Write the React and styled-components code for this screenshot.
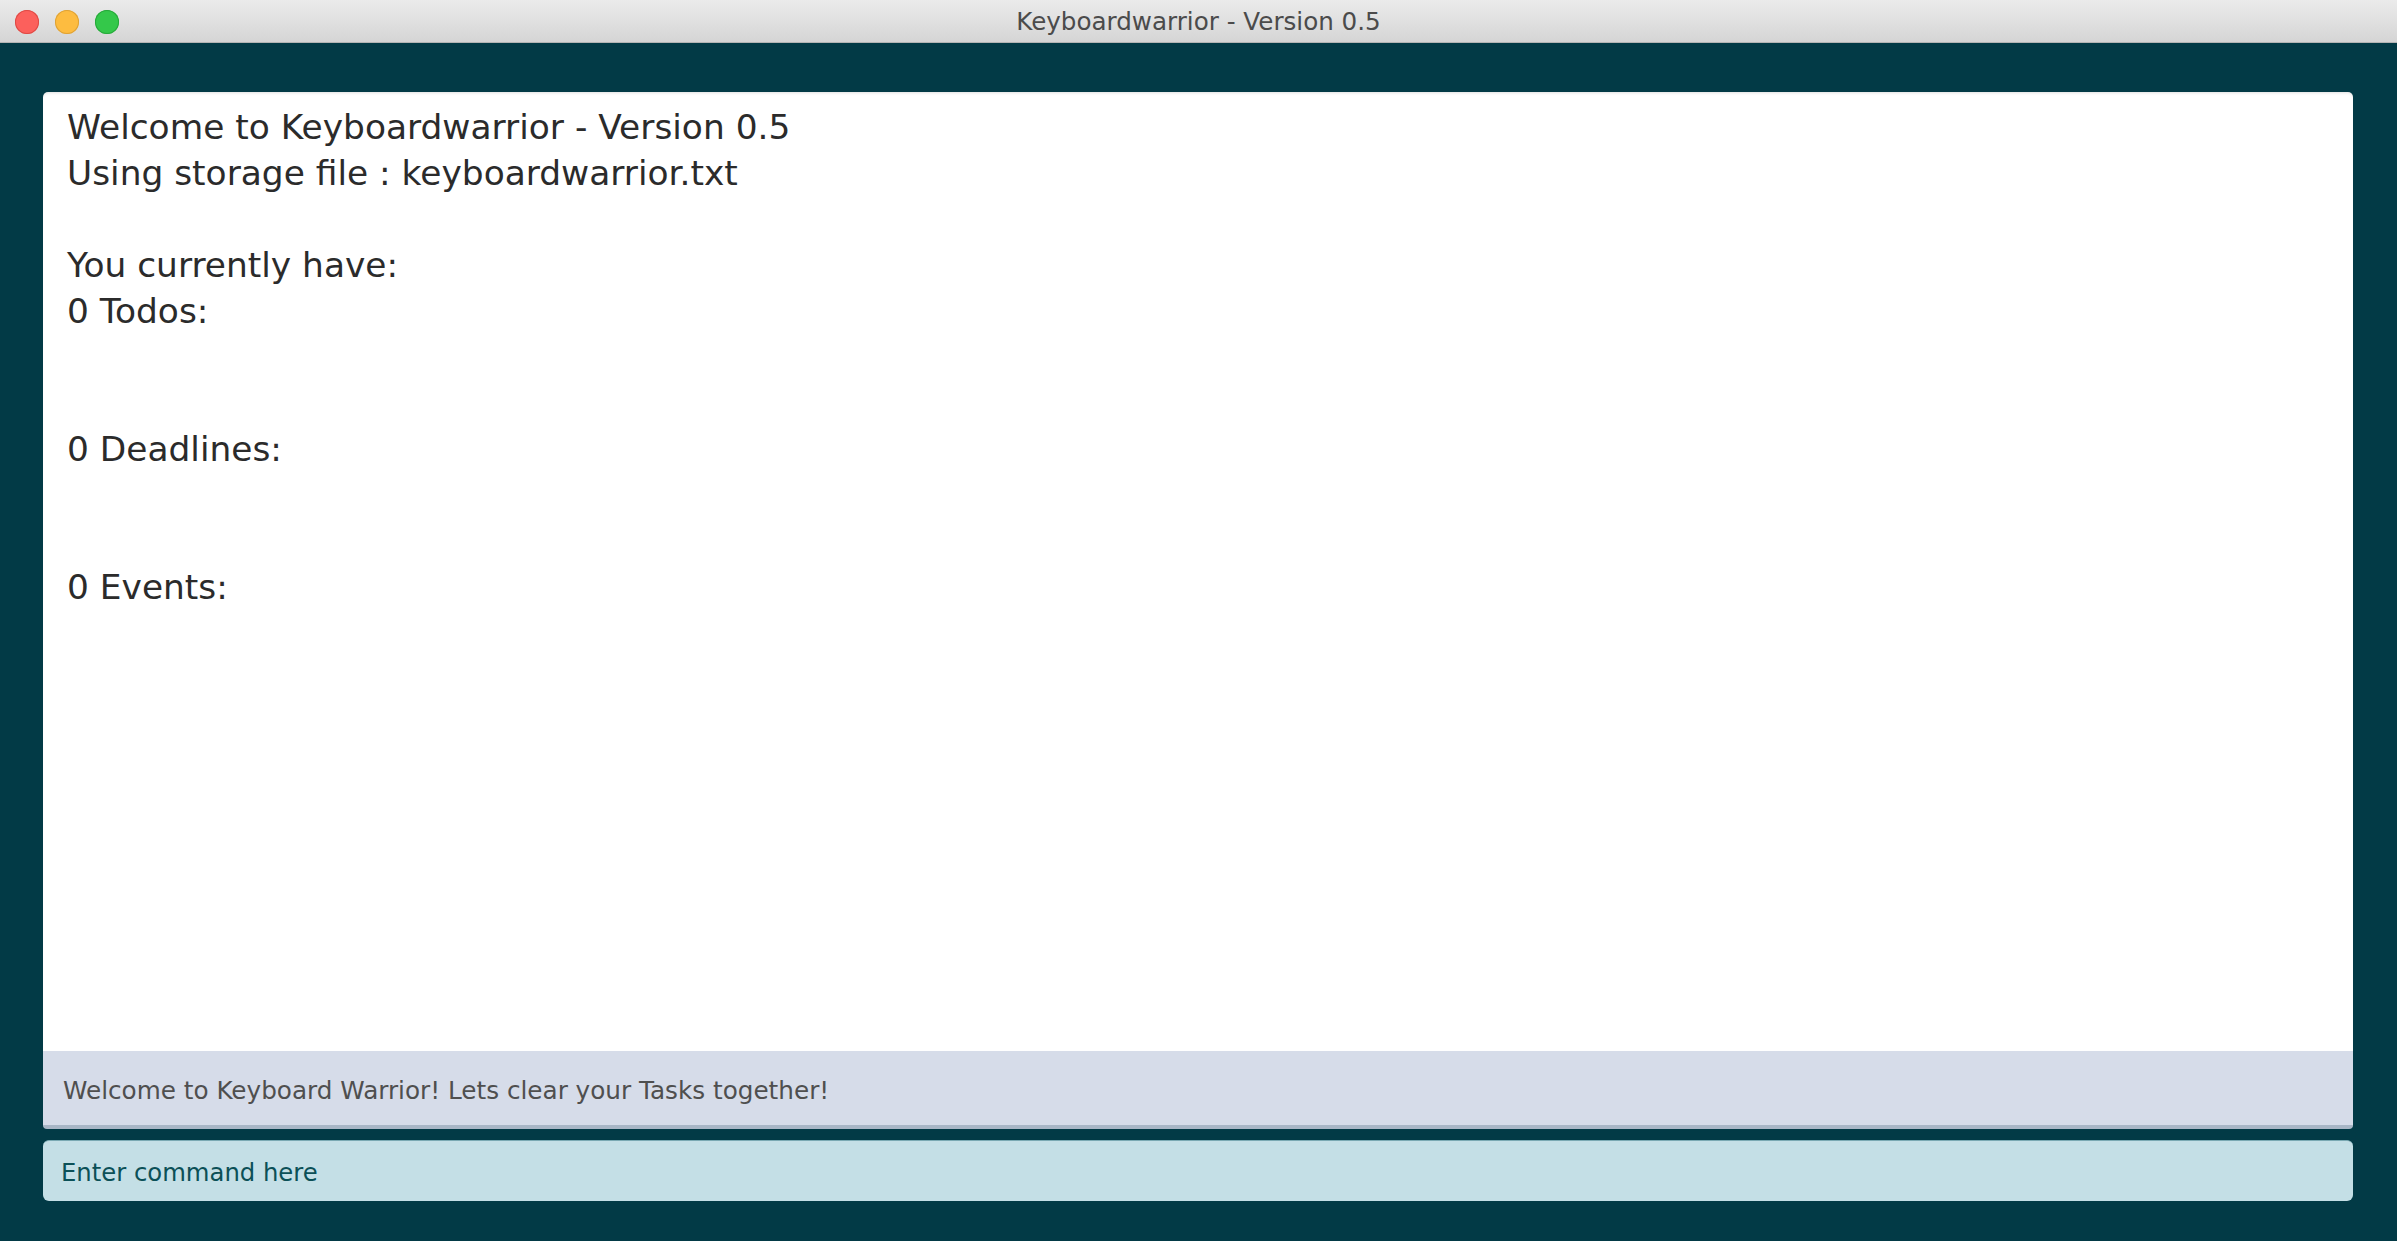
import React from "react";
import styled, { createGlobalStyle } from "styled-components";

const GlobalStyle = createGlobalStyle`
  html, body {
    margin: 0;
    padding: 0;
    height: 100%;
    overflow: hidden;
  }
  #root {
    height: 100%;
  }
`;

const outputLines = [
  "Welcome to Keyboardwarrior - Version 0.5",
  "Using storage file : keyboardwarrior.txt",
  "",
  "You currently have:",
  "0 Todos:",
  "",
  "",
  "0 Deadlines:",
  "",
  "",
  "0 Events:",
];

export default function App() {
  return (
    <>
      <GlobalStyle />
      <Window>
        <TitleBar>
          <Lights>
            <Light $color="#fc605c" $border="#de4a45" />
            <Light $color="#fdbc40" $border="#dea236" />
            <Light $color="#34c84a" $border="#27a83a" />
          </Lights>
          <Title>Keyboardwarrior - Version 0.5</Title>
        </TitleBar>

        <Body>
          <OutputPanel>
            {outputLines.map((line, i) => (
              <Line key={i}>{line || "\u00a0"}</Line>
            ))}
          </OutputPanel>
          <StatusBar>Welcome to Keyboard Warrior! Lets clear your Tasks together!</StatusBar>
          <CommandInput placeholder="Enter command here" />
        </Body>
      </Window>
    </>
  );
}

const Window = styled.div`
  display: flex;
  flex-direction: column;
  height: 100vh;
  background-color: #023a46;
`;

const TitleBar = styled.div`
  position: relative;
  height: 43px;
  flex-shrink: 0;
  display: flex;
  align-items: center;
  justify-content: center;
  background: linear-gradient(#ebebeb, #d5d5d5);
  border-bottom: 1px solid #b5b5b5;
  box-sizing: border-box;
`;

const Lights = styled.div`
  position: absolute;
  left: 15px;
  top: 10px;
  display: flex;
  gap: 16px;
`;

const Light = styled.span`
  width: 24px;
  height: 24px;
  border-radius: 50%;
  background-color: ${(props) => props.$color};
  box-shadow: inset 0 0 0 1px ${(props) => props.$border};
`;

const Title = styled.div`
  font-family: "DejaVu Sans", Verdana, sans-serif;
  font-size: 24.6px;
  color: #4b4b4b;
`;

const Body = styled.div`
  flex: 1;
  display: flex;
  flex-direction: column;
  padding: 49px 44px 40px 43px;
  min-height: 0;
`;

const OutputPanel = styled.div`
  flex: 1;
  background-color: #ffffff;
  border-radius: 5px 5px 0 0;
  box-shadow: inset 0 3px 3px -2px rgba(0, 0, 0, 0.12);
  padding: 12px 24px;
  overflow: hidden;
`;

const Line = styled.div`
  font-family: "DejaVu Sans", Verdana, sans-serif;
  font-size: 34.4px;
  line-height: 46px;
  color: #2b2b2b;
  white-space: pre;
`;

const StatusBar = styled.div`
  height: 78px;
  flex-shrink: 0;
  box-sizing: border-box;
  display: flex;
  align-items: center;
  padding: 5px 20px 0;
  background-color: #d6dce9;
  border-bottom: 4px solid #a8b6c6;
  border-radius: 0 0 4px 4px;
  font-family: "DejaVu Sans", Verdana, sans-serif;
  font-size: 24.7px;
  color: #4f4f4f;
`;

const CommandInput = styled.input`
  margin-top: 11px;
  height: 61px;
  flex-shrink: 0;
  box-sizing: border-box;
  border: none;
  border-top: 1px solid #7aa9b3;
  border-radius: 6px;
  background-color: #c4dfe6;
  padding: 3px 18px 0;
  font-family: "DejaVu Sans", Verdana, sans-serif;
  font-size: 24.3px;
  outline: none;

  &::placeholder {
    color: #0b5057;
    opacity: 1;
  }
`;
